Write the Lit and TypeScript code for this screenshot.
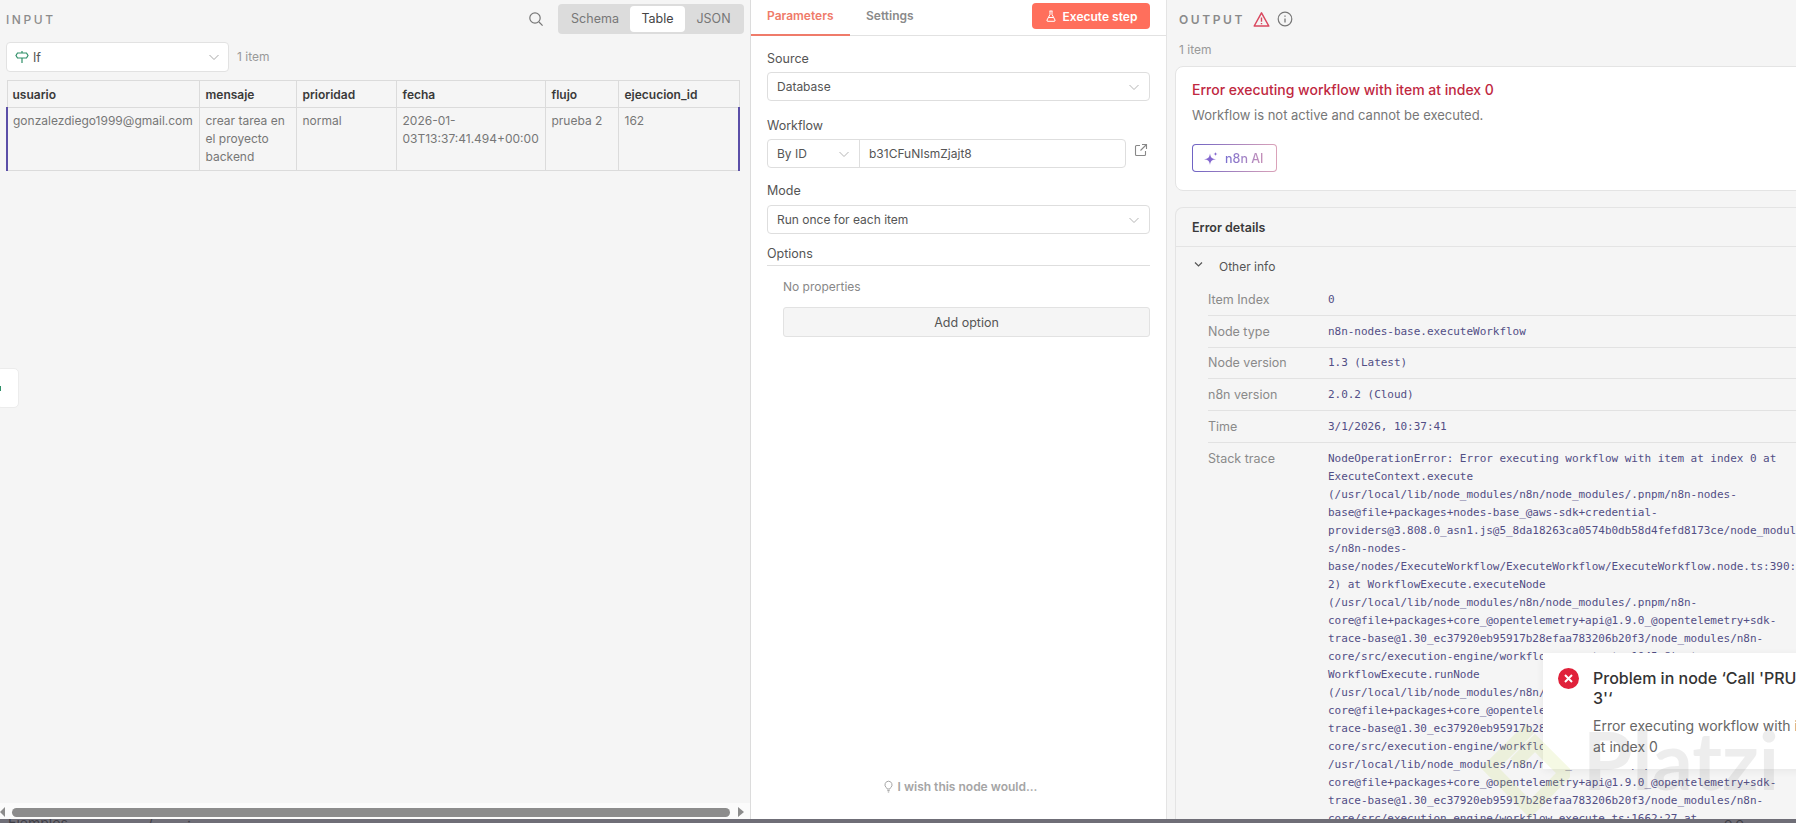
import { LitElement, html, css, svg } from "lit";
import { customElement } from "lit/decorators.js";

const CHEV = html`<svg class="chev" viewBox="0 0 12 12"><path d="M1.5 4l4.5 4.5L10.5 4" fill="none" stroke="currentColor" stroke-width="1"/></svg>`;

const STACK = [
  "NodeOperationError: Error executing workflow with item at index 0 at",
  "ExecuteContext.execute",
  "(/usr/local/lib/node_modules/n8n/node_modules/.pnpm/n8n-nodes-",
  "base@file+packages+nodes-base_@aws-sdk+credential-",
  "providers@3.808.0_asn1.js@5_8da18263ca0574b0db58d4fefd8173ce/node_modul",
  "s/n8n-nodes-",
  "base/nodes/ExecuteWorkflow/ExecuteWorkflow/ExecuteWorkflow.node.ts:390:",
  "2) at WorkflowExecute.executeNode",
  "(/usr/local/lib/node_modules/n8n/node_modules/.pnpm/n8n-",
  "core@file+packages+core_@opentelemetry+api@1.9.0_@opentelemetry+sdk-",
  "trace-base@1.30_ec37920eb95917b28efaa783206b20f3/node_modules/n8n-",
  "core/src/execution-engine/workflow-execute.ts:1045:8) at",
  "WorkflowExecute.runNode",
  "(/usr/local/lib/node_modules/n8n/node_modules/.pnpm/n8n-",
  "core@file+packages+core_@opentelemetry+api@1.9.0_@opentelemetry+sdk-",
  "trace-base@1.30_ec37920eb95917b28efaa783206b20f3/node_modules/n8n-",
  "core/src/execution-engine/workflow-execute.ts:1662:27 at",
  "/usr/local/lib/node_modules/n8n/node_modules/.pnpm/n8n-",
  "core@file+packages+core_@opentelemetry+api@1.9.0_@opentelemetry+sdk-",
  "trace-base@1.30_ec37920eb95917b28efaa783206b20f3/node_modules/n8n-",
  "core/src/execution-engine/workflow-execute.ts:1662:27 at",
];

const INFO = [
  ["Item Index", "0"],
  ["Node type", "n8n-nodes-base.executeWorkflow"],
  ["Node version", "1.3 (Latest)"],
  ["n8n version", "2.0.2 (Cloud)"],
  ["Time", "3/1/2026, 10:37:41"],
];

@customElement("app-root")
export class AppRoot extends LitElement {
  static styles = css`
    :host { display: block; position: relative; width: 1796px; height: 823px; overflow: hidden; font-family: Inter, "Liberation Sans", sans-serif; color: #555; background: #f5f5f5; }
    * { box-sizing: border-box; }
    .main { display: flex; height: 819px; }
    .bar { height: 4px; background: #6f6e77; overflow: hidden; display: flex; color: #3f3f46; font-size: 14px; line-height: 14px; padding-left: 8px; }
    .bar span { margin-top: -3px; }
    .bar .a { width: 140px; }
    .bar .b { width: 39px; }
    .bar .c { margin-left: 1533px; letter-spacing: 3px; }

    .input { width: 751px; flex: none; border-right: 1px solid #dcdcdc; display: flex; flex-direction: column; background: #f5f5f5; }
    .in-body { flex: 1; min-height: 0; padding: 4px 6px 0; }
    .in-head { display: flex; align-items: center; height: 30px; }
    .cap { font-size: 12px; letter-spacing: 2.6px; color: #8c8c8c; font-weight: 500; }
    .search { margin-left: auto; margin-right: 14px; width: 16px; height: 16px; color: #777; }
    .seg { width: 186px; height: 30px; background: #dcdcdc; border-radius: 4px; display: flex; align-items: center; padding: 0 2px 0 0; font-size: 12.5px; color: #777; }
    .seg span { text-align: center; line-height: 26px; }
    .seg .s1 { width: 72px; padding-left: 2px; }
    .seg .s2 { width: 55px; background: #fff; border-radius: 4px; color: #444; }
    .seg .s3 { flex: 1; }
    .src { display: flex; align-items: center; margin-top: 8px; height: 30px; gap: 8px; font-size: 12px; color: #999; }
    .src .n { padding-bottom: 2px; }
    .pick { width: 223px; height: 30px; background: #fff; border: 1px solid #e2e2e2; border-radius: 4px; display: flex; align-items: center; padding: 0 8px; gap: 4px; font-size: 12.5px; color: #555; }
    .pick svg.if { width: 14px; height: 14px; color: #2f8f68; }
    .pick .chev { margin-left: auto; }
    .chev { width: 12px; height: 12px; color: #a8a8a8; flex: none; }
    table { border-collapse: collapse; table-layout: fixed; width: 732px; margin-top: 8px; font-size: 12px; }
    th, td { border: 1px solid #dbdbdb; text-align: left; padding: 0 3px 0 6px; overflow-wrap: anywhere; }
    th:first-child, td:first-child { padding-left: 5px; padding-right: 5px; }
    th { height: 27px; font-weight: 600; color: #3a3a3a; font-size: 12px; }
    td { height: 63px; vertical-align: top; padding-top: 4px; line-height: 18px; color: #777; font-size: 12px; }
    td.msg { padding-right: 6px; }
    tr.row td:first-child { border-left: 2px solid #5b4fa8; }
    tr.row td:last-child { border-right: 2px solid #5b4fa8; }
    .sb { height: 16px; flex: none; background: #fbfbfb; display: flex; align-items: center; padding: 2px 4px 0 0; }
    .sb .al { width: 0; height: 0; border: 5px solid transparent; border-right: 5px solid #8c8c8c; border-left: 0; margin-right: 7px; }
    .sb .th { width: 718px; height: 9px; background: #8c8c8c; border-radius: 5px; }
    .sb .ar { width: 0; height: 0; border: 5px solid transparent; border-left: 6px solid #8c8c8c; border-right: 0; margin-left: 8px; }

    .mid { width: 416px; flex: none; background: #fff; border-right: 1px solid #e4e4e4; display: flex; flex-direction: column; }
    .tabs { display: flex; align-items: flex-start; height: 36px; border-bottom: 1px solid #e2e2e2; position: relative; }
    .tab { font-size: 12px; font-weight: 500; color: #8a8a8a; padding-top: 8px; height: 36px; }
    .tab.on { width: 99px; padding-left: 16px; color: #ef7b6a; border-bottom: 2px solid #ef7b6a; font-weight: 600; }
    .tab.off { margin-left: 16px; font-weight: 600; }
    .exec { margin-left: auto; margin-right: 16px; margin-top: 3px; width: 118px; height: 26px; background: #ff6f5c; border-radius: 4px; color: #fff; display: flex; align-items: center; justify-content: center; gap: 6px; font-size: 12px; font-weight: 600; }
    .exec svg { width: 12px; height: 12px; }
    .form { padding: 0 16px; display: flex; flex-direction: column; flex: 1; }
    .lab { font-size: 12.5px; color: #555; height: 18px; line-height: 18px; margin-top: 14px; }
    .lab.wl { margin-top: 16px; }
    .field { margin-top: 4px; height: 29px; background: #fff; border: 1px solid #dedede; border-radius: 4px; display: flex; align-items: center; padding: 0 9px; font-size: 12px; color: #555; }
    .field.low { margin-top: 5px; }
    .field .chev { margin-left: auto; color: #b5b5b5; }
    .wf { display: flex; align-items: flex-start; }
    .wf .group { flex: none; width: 359px; padding: 0; }
    .wf .by { width: 92px; height: 100%; display: flex; align-items: center; padding: 0 9px; border-right: 1px solid #dedede; }
    .wf .val { padding-left: 9px; }
    .ext { width: 14px; height: 14px; color: #888; margin: 8px 0 0 8px; }
    .opt { margin-top: 11px; font-size: 12.5px; color: #555; height: 21px; line-height: 18px; border-bottom: 1px solid #dedede; }
    .none { margin: 12px 0 0 16px; font-size: 12px; color: #888; line-height: 18px; }
    .add { margin: 11px 0 0 16px; height: 30px; background: #f5f5f5; border: 1px solid #e2e2e2; border-radius: 3px; display: flex; align-items: center; justify-content: center; font-size: 12.5px; color: #555; }
    .wish { margin-top: auto; margin-bottom: 25px; display: flex; align-items: center; justify-content: center; gap: 3px; font-size: 12px; font-weight: 600; color: #a5a5a5; height: 16px; padding-left: 2px; }
    .wish svg { width: 13px; height: 13px; }

    .out { flex: 1; min-width: 0; overflow: hidden; padding: 0 0 0 8px; }
    .out-head { display: flex; align-items: center; height: 38px; padding-left: 4px; }
    .out-head .cap { letter-spacing: 2.6px; font-weight: 600; color: #8a8a8a; }
    .out-head svg { flex: none; }
    .warn { width: 17px; height: 17px; margin-left: 8px; color: #d9485f; }
    .info { width: 16px; height: 16px; margin-left: 7px; color: #777; }
    .count { font-size: 12px; color: #999; height: 18px; line-height: 18px; margin: 3px 0 0 4px; }
    .card { width: 700px; background: #fff; border: 1px solid #e4e4e4; border-radius: 8px; margin-top: 7px; height: 125px; padding: 13px 16px; }
    .etitle { font-size: 14px; font-weight: 500; color: #c0283f; line-height: 20px; }
    .ebody { font-size: 13px; color: #777; line-height: 18px; margin-top: 6px; }
    .ai { margin-top: 20px; width: 85px; height: 28px; border: 1px solid transparent; border-radius: 4px; background: linear-gradient(#fff, #fff) padding-box, linear-gradient(90deg, #6f63c4, #dba3b9) border-box; display: flex; align-items: center; padding-left: 11px; gap: 6px; font-size: 12.5px; font-weight: 500; }
    .ai svg { width: 15px; height: 15px; color: #8467cf; flex: none; }
    .ai span { background: linear-gradient(90deg, #7a6fd0, #c792b8); -webkit-background-clip: text; background-clip: text; color: transparent; }
    .details { width: 700px; margin-top: 16px; border: 1px solid #e4e4e4; border-bottom: 0; border-radius: 8px 8px 0 0; }
    .d-head { height: 39px; border-bottom: 1px solid #e4e4e4; padding-left: 16px; display: flex; align-items: center; font-size: 12.5px; font-weight: 600; color: #3a3a3a; }
    .other { display: flex; align-items: center; height: 37px; padding: 1px 0 0 17px; font-size: 12px; color: #555; }
    .other svg { width: 11px; height: 11px; margin-right: 15px; color: #555; margin-top: -3px; }
    .rows { margin-left: 32px; }
    .r { display: grid; grid-template-columns: 120px 1fr; border-bottom: 1px solid #e2e2e2; padding: 6.9px 0 5.9px; font-size: 12.5px; color: #8a8a8a; line-height: 18px; }
    .r:last-child { border-bottom: 0; }
    .code { font-family: "DejaVu Sans Mono", "Liberation Mono", monospace; font-size: 11px; letter-spacing: -0.03px; color: #524e85; line-height: 18px; white-space: pre; }

    .side { position: absolute; left: -4px; top: 368px; width: 23px; height: 40px; background: #fff; border: 1px solid #ececec; border-radius: 5px; display: flex; align-items: center; justify-content: flex-end; padding-right: 17px; }
    .side i { width: 2px; height: 5px; background: #2f8f68; flex: none; }
    .toast { position: absolute; left: 1543px; top: 653px; width: 320px; height: 116px; background: #fff; box-shadow: 0 2px 8px rgba(0,0,0,.06); display: flex; padding: 15px 0 0 15px; gap: 14px; }
    .x { width: 21px; height: 21px; border-radius: 50%; background: #e0213a; flex: none; display: flex; align-items: center; justify-content: center; }
    .x svg { width: 9px; height: 9px; }
    .t-title { font-size: 16px; font-weight: 500; line-height: 20px; color: #333; white-space: nowrap; }
    .t-body { font-size: 14px; line-height: 21px; color: #666; margin-top: 7px; white-space: nowrap; }
    .mark { position: absolute; left: 1480px; top: 718px; width: 316px; height: 101px; pointer-events: none; overflow: hidden; }
    .mark svg { position: absolute; left: 0; top: 0; width: 90px; height: 101px; }
    .mark .p { position: absolute; left: 103px; top: -7px; font-family: Lato, "Open Sans", sans-serif; font-size: 80px; line-height: 96px; font-weight: 700; color: rgba(110,110,110,.12); }
  `;

  render() {
    return html`
      <div class="main">
        <section class="input">
          <div class="in-body">
            <div class="in-head">
              <span class="cap">INPUT</span>
              <svg class="search" viewBox="0 0 16 16"><circle cx="7" cy="7" r="5.2" fill="none" stroke="currentColor" stroke-width="1.2"/><path d="M11 11l3.6 3.6" stroke="currentColor" stroke-width="1.2"/></svg>
              <div class="seg"><span class="s1">Schema</span><span class="s2">Table</span><span class="s3">JSON</span></div>
            </div>
            <div class="src">
              <div class="pick">
                <svg class="if" viewBox="0 0 14 14"><path d="M7 1v2M7 8v5M2.500 3h9l1.500 2.500-1.500 2.500h-9l-1.500-2.500z" fill="none" stroke="currentColor" stroke-width="1.200"/></svg>
                <span>If</span>${CHEV}
              </div>
              <span class="n">1 item</span>
            </div>
            <table>
              <colgroup><col style="width:192px"/><col style="width:97px"/><col style="width:100px"/><col style="width:149px"/><col style="width:73px"/><col style="width:121px"/></colgroup>
              <tr><th>usuario</th><th>mensaje</th><th>prioridad</th><th>fecha</th><th>flujo</th><th>ejecucion_id</th></tr>
              <tr class="row"><td>gonzalezdiego1999@gmail.com</td><td class="msg">crear tarea en el proyecto backend</td><td>normal</td><td>2026-01-03T13:37:41.494+00:00</td><td>prueba 2</td><td>162</td></tr>
            </table>
          </div>
          <div class="sb"><i class="al"></i><div class="th"></div><i class="ar"></i></div>
        </section>

        <section class="mid">
          <div class="tabs">
            <div class="tab on">Parameters</div>
            <div class="tab off">Settings</div>
            <div class="exec">
              <svg viewBox="0 0 12 12"><path d="M4.500 1h3M5 1v3.500L2 10a1 1 0 0 0 1 1.300h6A1 1 0 0 0 10 10L7 4.500V1M3.500 7.500h5" fill="none" stroke="currentColor" stroke-width="1"/></svg>
              Execute step
            </div>
          </div>
          <div class="form">
            <div class="lab">Source</div>
            <div class="field">Database${CHEV}</div>
            <div class="lab wl">Workflow</div>
            <div class="wf">
              <div class="field group">
                <div class="by">By ID${CHEV}</div>
                <div class="val">b31CFuNIsmZjajt8</div>
              </div>
              <svg class="ext" viewBox="0 0 14 14"><path d="M11.500 8v3.500a1 1 0 0 1-1 1h-8a1 1 0 0 1-1-1v-8a1 1 0 0 1 1-1H6M8 1.500h4.500V6M12.500 1.500L6.500 7.500" fill="none" stroke="currentColor" stroke-width="1.100"/></svg>
            </div>
            <div class="lab">Mode</div>
            <div class="field low">Run once for each item${CHEV}</div>
            <div class="opt">Options</div>
            <div class="none">No properties</div>
            <div class="add">Add option</div>
            <div class="wish">
              <svg viewBox="0 0 13 13"><path d="M6.500 1.200a3.600 3.600 0 0 0-2.200 6.400c.5.4.7.9.7 1.400h3c0-.5.2-1 .7-1.400a3.600 3.600 0 0 0-2.200-6.400zM5.300 10.600h2.400M5.800 12h1.400" fill="none" stroke="currentColor" stroke-width="1"/></svg>
              I wish this node would...
            </div>
          </div>
        </section>

        <section class="out">
          <div class="out-head">
            <span class="cap">OUTPUT</span>
            <svg class="warn" viewBox="0 0 17 17"><path d="M8.500 1.800L15.800 15H1.200z" fill="none" stroke="currentColor" stroke-width="1.500" stroke-linejoin="round"/><path d="M8.500 6.500v4.200M8.500 12v1.200" stroke="currentColor" stroke-width="1.400"/></svg>
            <svg class="info" viewBox="0 0 16 16"><circle cx="8" cy="8" r="6.800" fill="none" stroke="currentColor" stroke-width="1.200"/><path d="M8 7.400v4M8 4.600v1.200" stroke="currentColor" stroke-width="1.300"/></svg>
          </div>
          <div class="count">1 item</div>
          <div class="card">
            <div class="etitle">Error executing workflow with item at index 0</div>
            <div class="ebody">Workflow is not active and cannot be executed.</div>
            <div class="ai">
              <svg viewBox="0 0 15 15"><path d="M6 2.500C6.600 6.500 7.800 7.700 12 8.300 7.800 8.900 6.600 10 6 14 5.400 10 4.200 8.900 0 8.300 4.200 7.700 5.400 6.500 6 2.500z" fill="currentColor"/><path d="M11.500 1c.2 1.300.7 1.800 2 2-1.300.2-1.800.7-2 2-.2-1.300-.7-1.800-2-2 1.300-.2 1.800-.7 2-2z" fill="currentColor"/></svg>
              <span>n8n AI</span>
            </div>
          </div>
          <div class="details">
            <div class="d-head">Error details</div>
            <div class="other">
              <svg viewBox="0 0 11 11"><path d="M2 3.500l3.500 3.500L9 3.500" fill="none" stroke="currentColor" stroke-width="1.200"/></svg>
              Other info
            </div>
            <div class="rows">
              ${INFO.map(([k, v]) => html`<div class="r"><span>${k}</span><span class="code">${v}</span></div>`)}
              <div class="r"><span>Stack trace</span><span class="code">${STACK.join("\n")}</span></div>
            </div>
          </div>
        </section>
      </div>
      <div class="bar"><span class="a">Ejemplos</span><span class="b">/</span><span>:</span><span class="c">oo</span></div>

      <div class="side"><i></i></div>
      <div class="toast">
        <div class="x"><svg viewBox="0 0 9 9"><path d="M1 1l7 7M8 1L1 8" stroke="#fff" stroke-width="2"/></svg></div>
        <div>
          <div class="t-title">Problem in node ‘Call 'PRUEBA<br/>3'‘</div>
          <div class="t-body">Error executing workflow with item<br/>at index 0</div>
        </div>
      </div>
      <div class="mark">
        <svg viewBox="0 0 90 101">${svg`<path d="M50 10L10 50l40 41 35-36-30-30-20 20" fill="none" stroke="rgba(190,215,90,.16)" stroke-width="13"/>`}</svg>
        <span class="p">Platzi</span>
      </div>
    `;
  }
}
